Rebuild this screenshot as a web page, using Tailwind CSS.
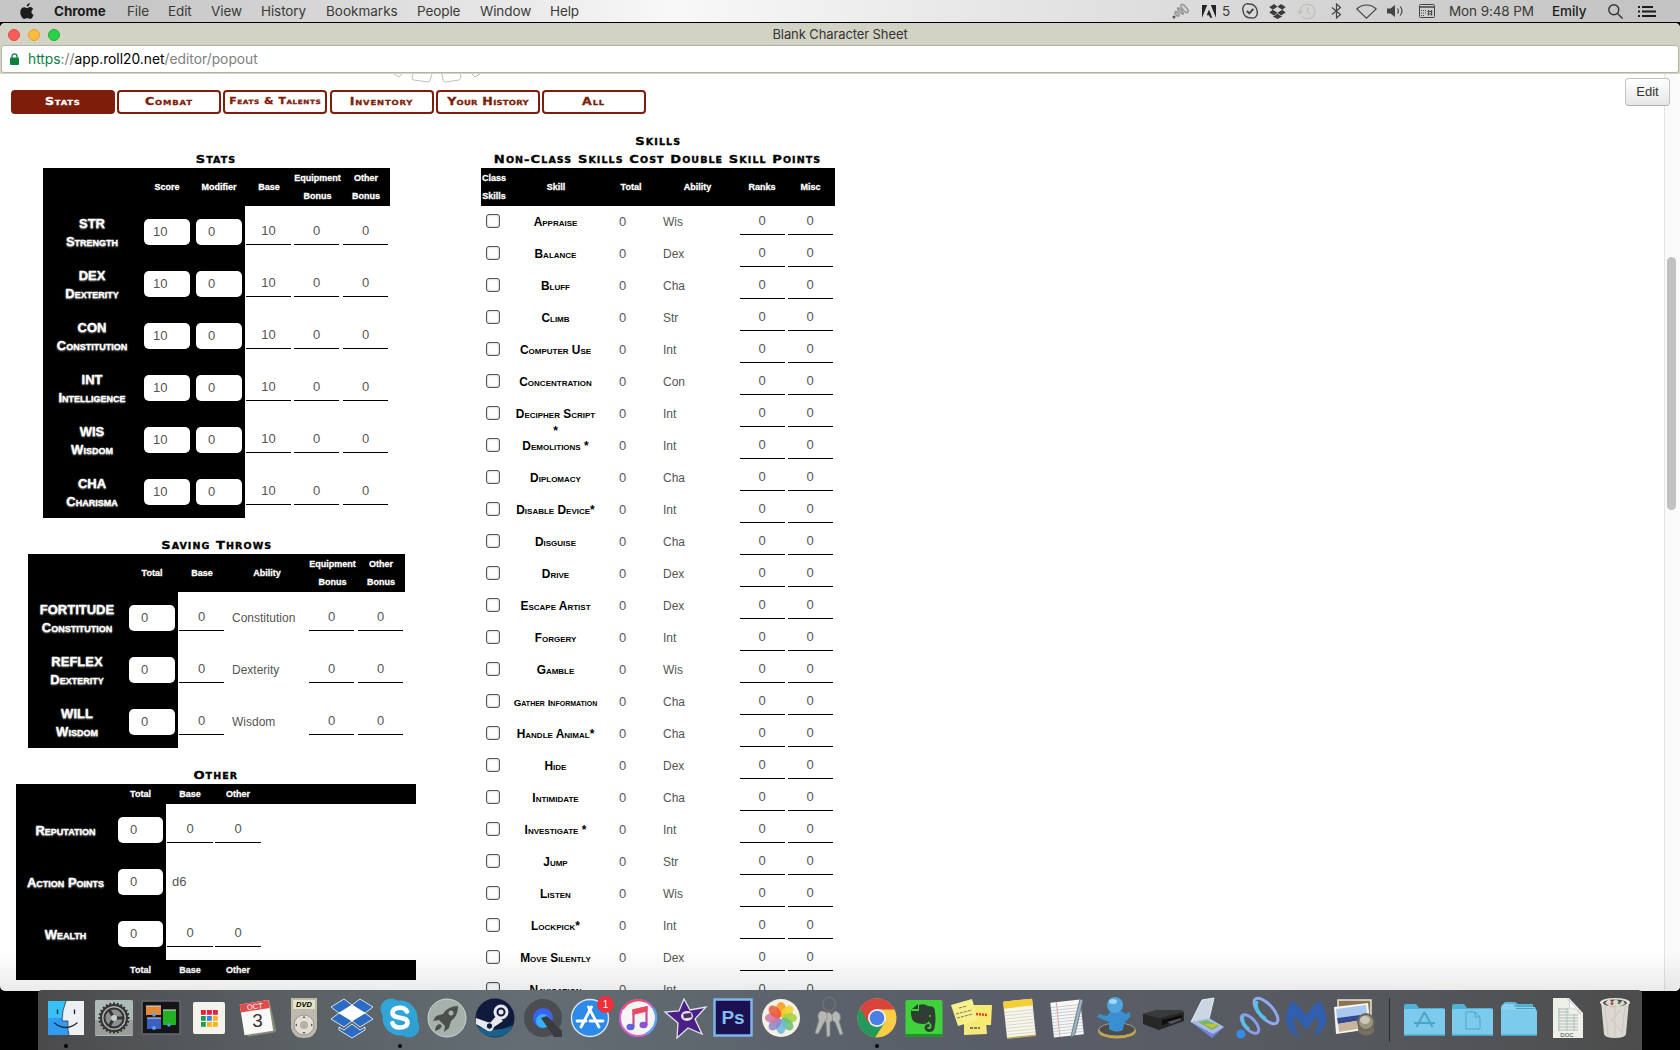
<!DOCTYPE html>
<html lang="en">
<head>
<meta charset="utf-8">
<title>Blank Character Sheet</title>
<script src="https://cdn.jsdelivr.net/npm/@tailwindcss/browser@4"></script>
</head>
<body class="relative w-[1680px] h-[1050px] overflow-hidden bg-black font-['Liberation_Sans',sans-serif]">

<!-- Menu bar -->
<header class="flex h-[22px] items-center bg-linear-to-r from-[#c6c6c6] via-[#f7f8f7] to-[#c4c4c4] from-[8%] via-[40%] to-[97%] pl-[20px] font-['Inter',sans-serif] text-[13.5px] tracking-[-0.1px] text-[#3a3a36]">
  <svg class="mr-[20px] h-[17px] w-[14px]" viewBox="0 0 14 17" fill="#1c1c1c"><path d="M9.8 0c.1 1.8-1.5 3.5-3.1 3.5C6.500 1.800 8.100.200 9.800 0zM10 4.100c.9 0 2.400.5 3.200 1.800-2.500 1.500-2.100 4.900.5 5.900-.6 1.600-2 4.100-3.400 4.100-1.200 0-1.500-.7-3-.7s-1.900.7-3 .7C2.600 16 .3 12.500.3 9.200c0-3.200 2-5 4.100-5 1.200 0 2.100.8 3 .8.800 0 1.700-.9 2.600-.9z"/></svg>
  <span class="w-[73px] font-bold text-[#1c1c1c]">Chrome</span>
  <span class="w-[41px]">File</span>
  <span class="w-[43px]">Edit</span>
  <span class="w-[50px]">View</span>
  <span class="w-[65px]">History</span>
  <span class="w-[91px] tracking-[0px]">Bookmarks</span>
  <span class="w-[63px]">People</span>
  <span class="w-[70px]">Window</span>
  <span class="w-[622px]">Help</span>
  <svg class="mr-[13px] h-[16px] w-[17px] shrink-0" viewBox="0 0 17 16" fill="none" stroke="#9a9a98" stroke-width="1.800"><circle cx="2" cy="14" r="1.500" fill="#555" stroke="none"/><ellipse cx="5" cy="11" rx="1.200" ry="2.600" transform="rotate(-40 5 11)"/><ellipse cx="8.500" cy="8" rx="1.200" ry="4" transform="rotate(-40 8.500 8)"/><ellipse cx="12.500" cy="5.500" rx="2" ry="5" transform="rotate(-40 12.500 5.500)"/></svg>
  <svg class="mr-[6px] h-[13px] w-[14px] shrink-0" viewBox="0 0 14 13" fill="#222"><path d="M0 0h5.200L0 12.800zM8.800 0H14v12.800zM7 4.600l3.300 8.200H8.100l-1-2.600H4.700z"/></svg>
  <span class="w-[20px]">5</span>
  <svg class="mr-[11px] h-[16px] w-[16px] shrink-0" viewBox="0 0 16 16" fill="none" stroke="#444" stroke-width="1.400"><path d="M4.500.9c1-.4 1.900-.2 2.600.2C11.500.7 15 4 15 8c.5 1.600.5 3.300-.5 4.700-1 2-3 2.800-5 2.100C5 15.500 1.300 12.500 1 8 .3 5 1.500 1.500 4.500.9z"/><path d="M4.800 8l2.500 2.400 4-4.500" stroke-width="2"/></svg>
  <svg class="mr-[11px] h-[15px] w-[17px] shrink-0" viewBox="0 0 17 15.500" fill="#3b3b3b"><path d="M5 0l3.500 2.800L3.600 6 0 3.200zM12 0L8.500 2.800 13.400 6 17 3.200zM0 8.700L3.600 6l4.900 3L5 12zM17 8.700L13.400 6 8.500 9l3.500 3zM8.500 9.800L12 12.700l1-.6v1L8.500 15.500 4 13.100v-1l1 .6z"/></svg>
  <svg class="mr-[15px] h-[17px] w-[19px] shrink-0" viewBox="0 0 19 17" fill="none" stroke="#c2c2b6" stroke-width="1.500"><path d="M3.200 8.500a7.300 7.300 0 1 1 2.200 5.300M10.500 4v5l3 2"/><path d="M0 8h6.500L3.200 11.500z" fill="#c2c2b6" stroke="none"/></svg>
  <svg class="mr-[14px] h-[16px] w-[11px] shrink-0" viewBox="0 0 11 16" fill="none" stroke="#444" stroke-width="1.200"><path d="M1 4.500l8.500 7L5.500 15V1l4 3.500L1 11.500"/></svg>
  <svg class="mr-[10px] h-[15px] w-[21px] shrink-0" viewBox="0 0 21 15" fill="none" stroke="#444" stroke-width="1.100"><path d="M.8 5c5.400-5.300 14-5.300 19.400 0l-9.700 9.200z"/></svg>
  <svg class="mr-[15px] h-[14px] w-[17px] shrink-0" viewBox="0 0 17 14" fill="none" stroke="#444" stroke-width="1.200"><path d="M0 4.500h3.500L8 1v12L3.500 9.500H0z" fill="#444" stroke="none"/><path d="M10.500 4.500q1.800 2.500 0 5M13.200 2.500q3.500 4.500 0 9"/></svg>
  <svg class="mr-[14px] h-[14px] w-[16px] shrink-0" viewBox="0 0 16 14" fill="none" stroke="#444"><rect x=".5" y=".5" width="15" height="13" rx="1"/><path d="M0 3h16" stroke-width="1.500"/><path d="M2 6.500h5M2 9h5M2 11.500h4" stroke-dasharray="1 1"/><path d="M9.500 6v5.500M12.500 6v5.500M8.500 7.500h5M8.500 10h5"/></svg>
  <span class="w-[103px] shrink-0 text-[13.500px] tracking-[-0.1px] whitespace-nowrap">Mon 9:48 PM</span>
  <span class="w-[56px] shrink-0 font-medium text-[#1c1c1c]">Emily</span>
  <svg class="mr-[15px] h-[15px] w-[15px] shrink-0" viewBox="0 0 15 15" fill="none" stroke="#333" stroke-width="1.400"><circle cx="5.800" cy="5.800" r="5"/><path d="M9.500 9.500l5 5"/></svg>
  <svg class="h-[11px] w-[18px] shrink-0" viewBox="0 0 18 11" fill="none" stroke="#1c1c1c" stroke-width="2"><path d="M0 1h2M4 1h11M0 5.500h2M4 5.500h14M0 10h2M4 10h14"/></svg>
</header>

<!-- Browser window -->
<div class="relative mt-px flex h-[968px] flex-col overflow-hidden rounded-[5px] bg-white">
  <div class="grid h-[22px] shrink-0 grid-cols-[1fr_auto_1fr] items-center bg-[#d3d3c5] px-[8px] pt-px">
    <div class="flex gap-[8px]">
      <span class="size-[12px] rounded-full border border-[#dd4a48] bg-[#fc5b57]"></span>
      <span class="size-[12px] rounded-full border border-[#dfa032] bg-[#fdbc40]"></span>
      <span class="size-[12px] rounded-full border border-[#1fad35] bg-[#2bd146]"></span>
    </div>
    <span class="font-['Inter',sans-serif] text-[13px] tracking-[-0.1px] text-[#333]">Blank Character Sheet</span>
  </div>
  <div class="flex h-[29px] shrink-0 flex-col bg-[#d3d3c5] px-[1px]">
    <div class="flex h-[28px] items-center rounded-[3px] border border-[#b4b4a3] bg-white pl-[8px] font-['Inter',sans-serif] text-[13.8px] text-[#808080]">
      <svg class="mr-[9px] h-[12px] w-[9px]" viewBox="0 0 9 12"><path d="M2 5V3.300a2.500 2.500 0 0 1 5 0V5" fill="none" stroke="#0b8043" stroke-width="1.300"/><rect y="4.500" width="9" height="7.500" rx="1" fill="#0b8043"/></svg>
      <span class="text-[#0b8043]">https</span>://<span class="text-black">app.roll20.net</span>/editor/popout
    </div>
  </div>

  <div class="flex min-h-0 flex-1">
    <main class="relative w-[1664px] overflow-hidden">
      <!-- bottom edge of the logo artwork -->
      <svg class="absolute left-[390px] top-0 h-[10px] w-[95px]" viewBox="0 0 95 10" fill="none" stroke="#bdbdbd"><path d="M4 0l5 3 3-3M23 0l-1 4q0 2 2 2l14 2q2 0 2-2l2-6M52 0l1 6q1 2 3 2l13-2q2-1 2-3l-1-3M82 0l3 3 5-3"/></svg>
      <nav class="flex gap-[2.200px] pt-[16px] pl-[11px] font-['DejaVu_Sans',sans-serif] text-[10.500px] font-bold text-[#7e1d0a] [font-variant:small-caps]" id="tabs"></nav>
      <div class="mt-[18px] flex">
        <div class="flex w-[433px] flex-col items-center gap-[18px] pt-[18px]" id="left"></div>
        <section class="ml-[48px] w-[354px]" id="skills"></section>
      </div>
    </main>
    <div class="flex flex-1 flex-col border-l border-[#e4e4e4] bg-[#fafafa] pt-[183px] pl-[2px]">
      <div class="h-[253px] w-[9px] rounded-full bg-[#c1c1c1]"></div>
    </div>
  </div>
  <div class="absolute top-[55px] right-[10px] flex h-[28px] w-[45px] items-center justify-center rounded-[4px] border border-[#c2c2c2] border-b-[#adadad] bg-linear-to-b from-white to-[#e6e6e6] text-[13px] text-[#333]">Edit</div>
  <div class="absolute inset-x-0 bottom-0 h-[40px] bg-linear-to-b from-transparent to-black/8"></div>
</div>

<!-- Dock -->
<div class="absolute bottom-0 left-[38px] flex h-[60px] w-[1604px] rounded-t-[4px] bg-linear-to-r from-[#4a4a4b] via-[#6b7879] via-[31%] to-[#4c4c4c] pl-[4px]">
  <div class="absolute inset-0 rounded-t-[4px] bg-linear-to-r from-transparent via-[#565a6a] via-[60%] to-transparent opacity-70"></div>
  <div class="relative flex" id="apps"></div>
  <div class="relative mt-[8px] ml-[12px] h-[44px] w-px bg-[#2c2c2c]"></div>
  <div class="relative ml-[10px] flex" id="stacks"></div>
</div>

<script>
const $ = id => document.getElementById(id);

$('tabs').innerHTML = [
  ['Stats', 'bg-[#7e1d0a] text-white tracking-[0.6px]'], ['Combat', 'tracking-[0.7px]'],
  ['Feats & Talents', 'text-[9px] tracking-[0.5px]'], ['Inventory', 'tracking-[0.7px]'],
  ['Your History', 'tracking-[0.2px]'], ['All', 'tracking-[0.7px]'],
].map(([t, c]) => `<div class="flex h-[24px] w-[104px] items-center justify-center whitespace-nowrap rounded-[4px] border-2 border-[#7e1d0a] ${c}"><span class="inline-block scale-x-[1.2] [-webkit-text-stroke:0.3px_currentColor]">${t.replace('&', '&amp;')}</span></div>`).join('');

const heading = (t, c = 'tracking-[0.9px]') => `<h2 class="h-[18px] text-center font-['DejaVu_Sans',sans-serif] text-[11px] leading-[19px] font-bold whitespace-nowrap text-black [font-variant:small-caps] ${c}"><span class="inline-block scale-x-[1.19] [-webkit-text-stroke:0.3px_currentColor]">${t}</span></h2>`;
const th = t => `<div class="text-center">${t}</div>`;
const label = (a, b) => `<div class="pt-[9px] text-center text-[13px] leading-[18px] font-bold text-white [-webkit-text-stroke:0.3px_#fff] [text-shadow:0_1px_2px_#ffffffaa]">${a ? `<div>${a}</div>` : ''}<div class="[font-variant:small-caps] whitespace-nowrap">${b}</div></div>`;
const box = (v, w = 'w-[46px]') => `<div class="mx-[3px] mt-[13px] h-[26px] rounded-[5px] bg-white ${w} ${v === '10' ? 'pl-[9px]' : 'pl-[12px]'} text-[13px] leading-[25px] text-[#555]">${v}</div>`;
const line = (v, c = 'ml-[1px] w-[45px]') => `<div class="${c} mt-[13px] h-[26px] border-b border-black text-center text-[13px] leading-[23px] text-[#555]">${v}</div>`;

const stats = [['STR','Strength'],['DEX','Dexterity'],['CON','Constitution'],['INT','Intelligence'],['WIS','Wisdom'],['CHA','Charisma']];
const saves = [['FORTITUDE','Constitution'],['REFLEX','Dexterity'],['WILL','Wisdom']];
const head = "grid items-center bg-black text-[9px] leading-[18px] font-bold text-white [-webkit-text-stroke:0.3px_#fff]";

const otherHead = `<div class="${head} h-[20px] grid-cols-[99px_51px_48px_48px]"><div></div>${th('Total')}${th('Base')}${th('Other')}</div>`;

$('left').innerHTML =
`<section class="w-[347px]">${heading('Stats')}
  <div class="${head} h-[38px] grid-cols-[98px_52px_52px_48px_49px_48px]"><div></div>${th('Score')}${th('Modifier')}${th('Base')}${th('Equipment<br>Bonus')}${th('Other<br>Bonus')}</div>
  ${stats.map(([a, b]) => `<div class="grid h-[52px] grid-cols-[202px_48px_49px_48px]"><div class="grid grid-cols-[98px_52px_52px] bg-black">${label(a, b)}${box('10')}${box('0')}</div>${line('10')}${line('0')}${line('0')}</div>`).join('')}
</section>
<section class="w-[377px]">${heading('Saving Throws')}
  <div class="${head} h-[38px] grid-cols-[98px_52px_48px_82px_49px_48px]"><div></div>${th('Total')}${th('Base')}${th('Ability')}${th('Equipment<br>Bonus')}${th('Other<br>Bonus')}</div>
  ${saves.map(([a, b]) => `<div class="grid h-[52px] grid-cols-[150px_48px_82px_49px_48px]"><div class="grid grid-cols-[98px_52px] bg-black">${label(a, b)}${box('0')}</div>${line('0')}<div class="pl-[6px] text-[12px] leading-[52px] text-[#555]">${b}</div>${line('0')}${line('0')}</div>`).join('')}
</section>
<section class="ml-[16px] w-[400px] self-start">${heading('Other')}${otherHead}
  ${['Reputation', 'Action Points', 'Wealth'].map((n, i) => `<div class="grid h-[52px] grid-cols-[150px_48px_48px]"><div class="grid grid-cols-[99px_51px] bg-black"><div class="pt-[9px]">${label('', n)}</div>${box('0', 'w-[45px]')}</div>${i === 1 ? '<div class="pl-[6px] text-[13px] leading-[52px] text-[#555]">d6</div>' : line('0', 'ml-[1px] w-[46px]') + line('0', 'ml-[1px] w-[46px]')}</div>`).join('')}
  ${otherHead}
</section>`;

const skills = [['Appraise','Wis'],['Balance','Dex'],['Bluff','Cha'],['Climb','Str'],['Computer Use','Int'],['Concentration','Con'],['Decipher Script<br>*','Int'],['Demolitions *','Int'],['Diplomacy','Cha'],['Disable Device*','Int'],['Disguise','Cha'],['Drive','Dex'],['Escape Artist','Dex'],['Forgery','Int'],['Gamble','Wis'],['Gather Information','Cha'],['Handle Animal*','Cha'],['Hide','Dex'],['Intimidate','Cha'],['Investigate *','Int'],['Jump','Str'],['Listen','Wis'],['Lockpick*','Int'],['Move Silently','Dex'],['Navigation','Int']];
$('skills').innerHTML = heading('Skills') + heading('Non-Class Skills Cost Double Skill Points') +
`<div class="${head} h-[38px] grid-cols-[26px_98px_52px_81px_48px_49px]">${th('Class<br>Skills')}${th('Skill')}${th('Total')}${th('Ability')}${th('Ranks')}${th('Misc')}</div>` +
skills.map(([n, a]) => `<div class="grid h-[32px] grid-cols-[26px_97px_53px_80px_48px_50px] text-[13px] text-[#555]">
  <div class="mt-[8px] ml-[5px] size-[14px] rounded-[3px] border border-[#555] bg-white shadow-[inset_0_0_2px_#999]"></div>
  <div class="h-[32px] pt-[8px] text-center leading-[17px] font-bold whitespace-nowrap text-black [font-variant:small-caps] ${n === 'Gather Information' ? 'text-[9.800px]' : 'text-[11.900px]'}">${n}</div>
  <div class="pl-[15px] leading-[32px]">0</div>
  <div class="pl-[6px] text-[12px] leading-[33px]">${a}</div>
  <div class="ml-[3px] h-[29px] w-[45px] border-b border-black pr-[1px] text-center leading-[30px]">0</div>
  <div class="ml-[3px] h-[29px] w-[45px] border-b border-black pr-[1px] text-center leading-[30px]">0</div>
</div>`).join('');

const folder = inner => `<path d="M0 8q0-2 2-2h10l3 4h24q2 0 2 2v4H0z" fill="#4fb1d8"/><path d="M0 11h41v26q0 1-1 1H1q-1 0-1-1z" fill="#7ccbec"/><path d="M0 36.500h41V38H0z" fill="#4b9fc2"/>${inner}`;
const petals = ['#f79a1d','#f3d22b','#a5d13f','#68bf7b','#6fb7dc','#8e86c9','#d277a5','#ee5a3a'].map((c, i) => `<ellipse cx="20" cy="11.500" rx="5" ry="7.500" fill="${c}" opacity=".88" transform="rotate(${i * 45} 20 20)"/>`).join('');
const dots = ['#e8203f','#e8203f','#e8203f','#1a9e57','#3b82f0','#f8b617','#1a9e57','#f8b617','#f8b617'].map((c, i) => `<rect x="${12 + i % 3 * 6}" y="${12 + Math.floor(i / 3) * 6}" width="4.800" height="4.800" fill="${c}"/>`).join('');
const gear = Array.from({length: 24}, (_, i) => `<path d="M19 4.500h2v4h-2z" fill="#333" transform="rotate(${i * 15} 20 20)"/>`).join('');
const lines = (x, y, w, n, s, c) => Array.from({length: n}, (_, i) => `<path d="M${x} ${y + i * s}h${w}" stroke="${c}" stroke-width=".6"/>`).join('');

const apps = [
 /* Finder */ `<path d="M2 3h36v34H2z" fill="#2f9df3"/><path d="M2 3h18v17H2z" fill="#36c1f8"/><path d="M20 3q-4 9-4 20h6q-1 7 1 14h15V3z" fill="#eef1f4"/><path d="M20 3q-4 9-4 20h6q-1 7 1 14" fill="none" stroke="#234" stroke-width=".8"/><path d="M11.500 12v3.500M28.500 12v3.500M8.500 25q11 9 22.500 0" fill="none" stroke="#1d2b3a" stroke-width="1.400" stroke-linecap="round"/>`,
 /* System Preferences */ `<rect x="1" y="2" width="38" height="36" rx="1.500" fill="#aebcb8"/><path d="M1 22h38v15H1z" fill="#999e9b"/>${gear}<circle cx="20" cy="20" r="13" fill="#a9aca9" stroke="#333" stroke-width="2"/><circle cx="20" cy="20" r="9.500" fill="#8d918f" stroke="#333" stroke-width="2"/><path d="M20 20h10M20 20l-5-8.600M20 20l-5 8.600" stroke="#333" stroke-width="3"/><circle cx="20" cy="20" r="3" fill="#ccc"/>`,
 /* Spaces */ `<rect x="1" y="3" width="38" height="33" rx="1" fill="#151515" stroke="#666a70" stroke-width="1.500"/><path d="M5 8h15v9H5z" fill="#e08a3c"/><path d="M22 12h13v15H22z" fill="#23b224"/><path d="M6 20h14v11H6z" fill="#3d5fc0"/><path d="M5 8h15M22 12h13M6 20h14" stroke="#ddd"/><circle cx="13" cy="17" r="1.800" fill="#48a5f5"/><circle cx="28" cy="27" r="1.800" fill="#48a5f5"/><circle cx="13" cy="30" r="2" fill="#48a5f5"/>`,
 /* App launcher */ `<rect x="4" y="4" width="32" height="32" rx="2" fill="#f5f4ec"/>${dots}`,
 /* Calendar */ `<g transform="rotate(-9 20 20)"><path d="M6 4h29l2 31-1 2H8z" fill="#8a8878"/><path d="M5 4h29v31H5z" fill="#fafaf8"/><path d="M5 4h29v8H5z" fill="#e24b4b"/></g><text x="18" y="11" font-size="7.500" fill="#fff" text-anchor="middle" transform="rotate(-7 19 10)">OCT</text><text x="20.500" y="29" font-size="19" fill="#333" text-anchor="middle">3</text>`,
 /* DVD Player */ `<path d="M7 0h26v30q-2 10-13 10T7 30z" fill="#bdb9ac"/><path d="M9 2h22v9H9z" fill="#e3e4c4"/><text x="20" y="8.500" font-size="7.500" font-weight="bold" font-style="italic" text-anchor="middle">DVD</text><circle cx="20" cy="27" r="10" fill="#e2dfd6" stroke="#999"/><circle cx="20" cy="27" r="4" fill="#b5b1a6"/><path d="M20 18l1.500 2h-3zM20 36l1.500-2h-3zM11 27l2-1.500v3zM29 27l-2-1.500v3z" fill="#555"/>`,
 /* Dropbox */ `<g stroke="#fff" stroke-width=".8" fill="#2a6cc4"><path d="M12 1l8 6-13 8L-1 9zM28 1l-8 6 13 8 8-6zM-1 21l8-6 13 8-8 6zM41 21l-8-6-13 8 8 6z"/><path d="M7 29l5 3 8-6 8 6 5-3v3l-13 8-13-8z"/></g><path d="M20 7l13 8-13 8-13-8z" fill="#fff"/>`,
 /* Skype */ `<circle cx="20" cy="20" r="17.500" fill="#31a5d8"/><circle cx="11" cy="11" r="10.500" fill="#31a5d8"/><circle cx="29" cy="29" r="10.500" fill="#2f9fd4"/><path d="M27 13.500Q25 9.800 20 9.800c-5.500 0-7.500 2.200-7.500 5.200 0 6.500 15 3 15 9.500 0 3-2.800 5-7.500 5-5 0-7-2-7.500-4.500" fill="none" stroke="#fff" stroke-width="4.600" stroke-linecap="round"/>`,
 /* Launchpad */ `<circle cx="20" cy="20" r="19" fill="#a7b1ab" stroke="#d0d6d2"/><path d="M31 8q-10 0-15 8l-7 2-3 5 6-1 6 6-1 6 5-4 2-7q7-5 7-15z" fill="#4c4f4d"/><circle cx="24" cy="15" r="2.500" fill="#a7b1ab"/><path d="M13 26q-5 1-5 7 5-1 7-5z" fill="#4c4f4d"/>`,
 /* Steam */ `<circle cx="20" cy="20" r="19.500" fill="#101a3c"/><path d="M2 28q18 8 36-1-5 12-18 12T2 28z" fill="#19628b"/><circle cx="26" cy="14" r="6" fill="none" stroke="#e8e8ee" stroke-width="3"/><circle cx="26" cy="14" r="2.500" fill="#e8e8ee"/><path d="M1 20l14 5 7-8 6 6-9 6q-1 5-6 4L1 26z" fill="#e8e8ee"/><circle cx="14.500" cy="28" r="3.200" fill="#101a3c" stroke="#e8e8ee"/>`,
 /* QuickTime Player */ `<circle cx="20" cy="20" r="14.500" fill="#3a62f2" stroke="#4b4d51" stroke-width="9"/><circle cx="20" cy="23" r="7" fill="#38b0f6"/><path d="M18 20l6-2 15 15v6h-8z" fill="#3b3c40"/>`,
 /* App Store */ `<circle cx="20" cy="20" r="18.500" fill="#2c8bea" stroke="#dce6ee" stroke-width="1.400"/><path d="M21.500 9L11 29M18.500 9L29 29M7 23h9M20 23h13" stroke="#fff" stroke-width="2.800" stroke-linecap="round"/><circle cx="35.500" cy="6.500" r="8.500" fill="#ef2f3a"/><text x="35.500" y="10" font-size="10" fill="#fff" text-anchor="middle">1</text>`,
 /* iTunes */ `<circle cx="20" cy="20" r="18" fill="#f6f5f6" stroke="#d85fcf" stroke-width="2"/><path d="M35 9.500A18 18 0 0 1 28 36" fill="none" stroke="#4fa8f0" stroke-width="2"/><path d="M5 11A18 18 0 0 1 27 3.500" fill="none" stroke="#f14d62" stroke-width="2"/><path d="M15.500 29V12.500L28.500 9.500V27" fill="none" stroke="#c44f9d" stroke-width="2.200"/><path d="M14.500 11.500l15-3.500v5.500l-15 3.500z" fill="#f0485f"/><ellipse cx="12.500" cy="29" rx="4" ry="3.200" fill="#6661dc"/><ellipse cx="25.500" cy="27" rx="4" ry="3.200" fill="#8b52d2"/>`,
 /* iMovie */ `<path d="M18 1l6 11 16-3-11 12 7 15-14-6-11 10 1-15L-1 14l14-1z" fill="#4a1f86" stroke="#e6e3ea" stroke-width="1.300"/><ellipse cx="21" cy="18" rx="6" ry="5" fill="#e6e3ea"/><rect x="17.500" y="15.500" width="8" height="4.500" rx="1" fill="#463069" transform="rotate(-8 21 18)"/>`,
 /* Photoshop */ `<path d="M1.500 1.500h37v36h-37z" fill="#1c1150" stroke="#7db5ea" stroke-width="2.500"/><text x="20" y="26" font-size="19" font-weight="bold" fill="#84bdf2" text-anchor="middle">Ps</text>`,
 /* Photos */ `<circle cx="20" cy="20" r="19" fill="#f5f1e6"/>${petals}`,
 /* Keychain Access */ `<circle cx="20" cy="6" r="6.500" fill="none" stroke="#6c6d6c" stroke-width="2"/><g fill="#b6b8b5" stroke="#858784" stroke-width=".8"><path d="M26 13q7 2 5 9l-1 1 4 13-3 1-5-13q-4-1-4-6z"/><path d="M19 14q6 2 4 9l-2 1v14l-3 1-1-15q-4-2-3-7z"/><path d="M12 13q8 0 6 8l-2 2-7 13-3-1 4-13q-3-6 2-9z"/></g>`,
 /* Chrome */ `<circle cx="20" cy="20" r="19.500" fill="#fbcd45"/><path d="M20 20L3.100 10.200a19.500 19.500 0 0 0 15 29.200l9.700-15z" fill="#24995a"/><path d="M3.100 10.200A19.500 19.500 0 0 1 37.600 11.500H20L11.600 25z" fill="#d9453a"/><circle cx="20" cy="20" r="9" fill="#f3f3f1"/><circle cx="20" cy="20" r="7.300" fill="#4c7fe6"/>`,
 /* Evernote */ `<rect x="1.500" y="2" width="37" height="37" rx="2" fill="#3fd23a"/><path d="M1.500 36h37v1q0 2-2 2h-33q-2 0-2-2z" fill="#22952a"/><path d="M8 13h7V7q5-2 9 1 6 0 6.500 3 2 10 0 19-1 4-5 4t-5-4q0-4 5-4v3h-2q-1 2 2 2 2 0 2-4l-3-4q-1 3-5 3-8 0-11-4-2-5-1.500-10z" fill="#303d33"/><path d="M8 11l6-5v5z" fill="#303d33"/><circle cx="26" cy="18" r="1" fill="#3fd23a"/>`,
 /* Stickies */ `<path d="M12 24h22l1 12-23 1z" fill="#f4e97a"/><path d="M20 7h20l-1 20H20z" fill="#f6eb6f"/><path d="M-1 7l21-6 6 21-20 6z" fill="#f9f08a"/><path d="M7 10l8-2M4 16l16-4M5 20l16-4" stroke="#776" stroke-width="1" stroke-dasharray="3 1"/><path d="M24 16l12 1" stroke="#d43" stroke-width="2.500" stroke-dasharray="2 1"/><path d="M18 30h10" stroke="#554" stroke-width="1.500" stroke-dasharray="3 1"/>`,
 /* Notes */ `<g transform="rotate(-6 20 20)"><path d="M5 2h29v37H5z" fill="#f8f7ee"/><path d="M5 2h29v7H5z" fill="#f5cf38"/>${lines(5, 13, 29, 8, 3.200, '#c9c6b4')}<path d="M5 38h29v1.500H5z" fill="#c3a957"/></g>`,
 /* TextEdit */ `<g transform="rotate(-6 20 20)"><path d="M5 3h30v35H5z" fill="#f7f8f6"/>${lines(5, 8, 30, 10, 3, '#a9b3bb')}<path d="M11 3v35" stroke="#e7a6a1"/></g><path d="M33 1l3 1-8 34-4 4 1-6z" fill="#9fb2bf" stroke="#5c6a74" stroke-width=".8"/>`,
 /* Messenger */ `<ellipse cx="22" cy="33" rx="19" ry="7.500" fill="#d3a73c"/><ellipse cx="22" cy="31.500" rx="18" ry="6.500" fill="#4c4c49" stroke="#999"/><path d="M15 14l12-1 3 3 5-2v5l-6 6-1 7q-7 4-14-1V24L2 19l2-3 8 2z" fill="#3a8fd0"/><circle cx="20" cy="7" r="8" fill="#4fa6e0"/><ellipse cx="18" cy="3.500" rx="4" ry="2.500" fill="#a8d7f3"/>`,
 /* Printer */ `<path d="M0 16l14-4h24l3 2v9L16 32 0 26z" fill="#272727"/><path d="M0 16l16 4 25-6-3-2H14z" fill="#3a3a3a"/><path d="M19 22l20-5v4l-20 6z" fill="#0d0d0d"/><path d="M24 24l14-4v2l-10 4z" fill="#555"/>`,
 /* Scanner */ `<path d="M12 2l12-2-5 21-18 3z" fill="#cbd6e4" stroke="#e6edf4"/><path d="M1 24l18-3 15 8-12 11z" fill="#6f86d8"/><path d="M1 24l18-4 15 9-11 7z" fill="#a9bce8"/><path d="M8 24l9-2 12 6-7 4z" fill="#78b95a"/><path d="M14 26l15 0-7 4z" fill="#c5c238"/>`,
 /* Audio rings */ `<circle cx="3" cy="36" r="4.500" fill="#368be8"/><g fill="none" stroke-width="3"><ellipse cx="12" cy="26" rx="5.500" ry="11.500" transform="rotate(-42 12 26)" stroke="#8b9cec"/><ellipse cx="28" cy="13" rx="7" ry="16" transform="rotate(-42 28 13)" stroke="#8fa9ec"/><path d="M19 3q-3 10 9 18M5 18q-2 7 6 13" stroke="#4fc4e4"/></g>`,
 /* Malwarebytes */ `<path d="M6 3q7 3 14 15Q27 6 34 3q9 14 5 24-4 9-14 12 7-5 7-15l-1-6-11 14L9 18l-1 6q0 10 8 15Q4 37 1 27-3 15 6 3z" fill="#315fae"/>`,
 /* Preview */ `<path d="M5 2h33v28H5z" fill="#8c7450" stroke="#e9e5da" stroke-width="1.500"/><path d="M1 9l34-4 3 26-35 5z" fill="#f4f4f2"/><path d="M3 11l30-4 1 9-30 4z" fill="#a9c9ee"/><path d="M4 20l30-4 1 5-30 5z" fill="#344a90"/><path d="M5 26l30-5 1 8-30 5z" fill="#c9b69a"/><path d="M25 27h16v7q-8 7-16 0z" fill="#77705e"/><circle cx="33" cy="24" r="8" fill="#9a9481" stroke="#6b665b" stroke-width="2"/><ellipse cx="32" cy="22" rx="5" ry="4" fill="#cbc6b6"/>`,
];
const running = [0, 7, 17];
const cell = (g, on) => `<div class="relative w-[47.700px] shrink-0"><svg class="mx-auto mt-[8px] h-[40px] w-[40px] overflow-visible" viewBox="0 0 40 40">${g}</svg>${on ? '<span class="absolute bottom-[2px] left-[22px] size-[4px] rounded-full bg-black"></span>' : ''}</div>`;
$('apps').innerHTML = apps.map((g, i) => cell(g, running.includes(i))).join('');
$('stacks').innerHTML = [
  folder('<path d="M20.500 14l-8 15M20.500 14l8 15M10 25h21" stroke="#4da5c8" stroke-width="2" fill="none"/>'),
  folder('<path d="M14 14h9l5 5v12H14zM23 14v5h5" stroke="#4da5c8" fill="none"/>'),
  '<path d="M2 8l4-4h10l3 2h15v5H2z" fill="#5db8da"/><path d="M2 10l3-4h10l3 3h18l2 6H2z" fill="#8ad3ef"/><path d="M2 14q0-2 1-2h34q1 0 1 2v23q0 1-1 1H3q-1 0-1-1z" fill="#7ccbec"/><path d="M2 36.500h36V38H2z" fill="#4b9fc2"/><path d="M15 8h18M17 10.500h18" stroke="#4b9fc2"/>',
  `<path d="M6 0h16l14 15v25H6z" fill="#eef0e8"/><path d="M20 0q4 3 2 10 6-1 12 6z" fill="#fff" stroke="#bbb" stroke-width=".6"/>${lines(11, 11, 11, 2, 3, '#889')}${lines(11, 17, 20, 6, 3, '#8a9a94')}<path d="M12 10v23M20 10v23M27 16v17" stroke="#a5c9bb"/><path d="M13 34h15v5H13z" fill="#eef0e8"/><text x="20" y="38.500" font-size="6" fill="#444" text-anchor="middle">DOC</text>`,
  '<path d="M6 3l3 33q1 4 11 4t11-4l3-33z" fill="#dad8d0"/><path d="M10 8l3 29M20 8v31M30 8l-3 29M15 20l12 14M25 12l-9 12" stroke="#c9c7be" fill="none"/><ellipse cx="20" cy="4.500" rx="15" ry="4.500" fill="#e4e2dc"/><ellipse cx="20" cy="5" rx="12" ry="3.500" fill="#4d4a47"/><path d="M10 5l4-4 3 3 4-3 4 4 3-3 2 4-7 3-9-1z" fill="#dcd9d2"/><circle cx="17" cy="5.500" r="1.500" fill="#c5432e"/><circle cx="24" cy="5" r="1.300" fill="#3d8f58"/>',
].map(g => cell(g)).join('');
</script>
</body>
</html>
